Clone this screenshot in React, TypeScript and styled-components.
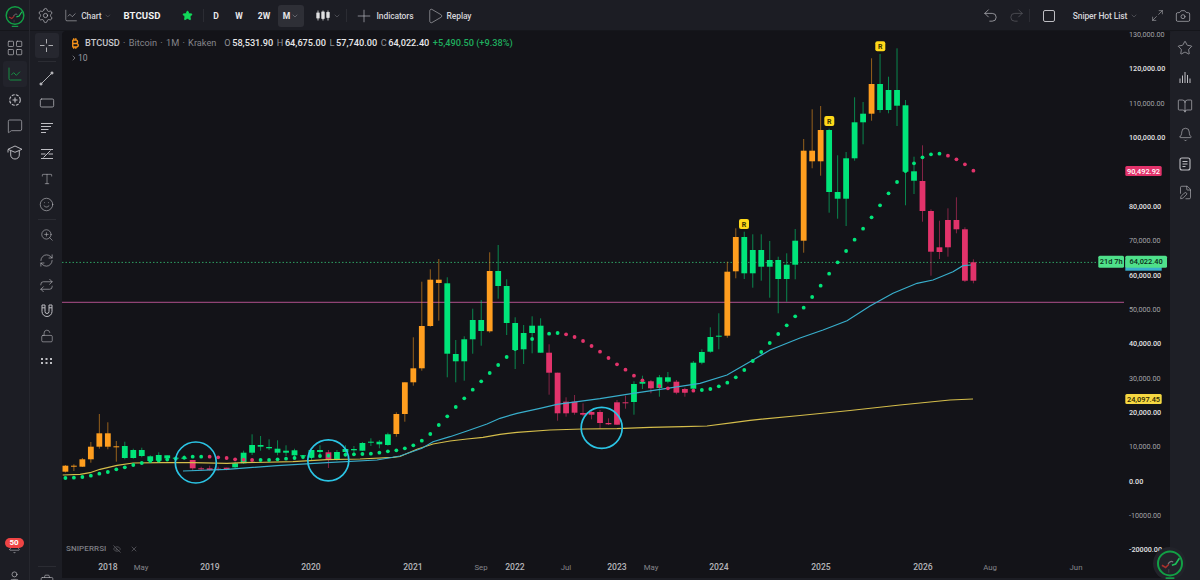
import React from "react";
import styled, { createGlobalStyle } from "styled-components";
import {
  Settings, ChartLine, Star, ChevronDown, Plus, Play, Undo2, Redo2, Maximize2, Camera,
  LayoutGrid, MessageSquare, RectangleHorizontal, Type, Smile, ZoomIn, RefreshCw, Repeat,
  LockOpen, BookOpen, Bell, FilePen, User, BriefcaseBusiness, EyeOff, X, ChevronRight,
} from "lucide-react";
import { FaBitcoinSign } from "react-icons/fa6";

const GREEN = "#00e57a";
const ORANGE = "#ff9e1f";
const RED = "#e2336b";
const BAR = "#1c1d24";
const CHART = "#131318";
const ICON = "#bdbdc2";
const FONT = `Roboto, "Liberation Sans", sans-serif`;

const Global = createGlobalStyle`
  html, body { margin: 0; padding: 0; background: ${BAR}; }
  body { width: 1200px; height: 580px; overflow: hidden; font-family: ${FONT}; }
`;

const Page = styled.div`
  width: 1200px; height: 580px; display: flex; flex-direction: column; overflow: hidden;
  background: ${BAR}; color: #ddd;
`;

/* ---------- Top toolbar ---------- */
const TopBar = styled.header`
  height: 31px; flex: none; display: flex; align-items: center; background: ${BAR};
  box-shadow: inset 0 -1px 0 #15161b;
`;
const Slot = styled.div<{ $w: number; $dim?: boolean; $pl?: number }>`
  width: ${(p) => p.$w}px; height: 31px; flex: none; box-sizing: border-box; display: flex; align-items: center; justify-content: center;
  gap: 3px; padding-left: ${(p) => p.$pl ?? 0}px; font-size: 8.5px; letter-spacing: -0.12px; font-weight: 500; white-space: nowrap;
  color: ${(p) => (p.$dim ? "#5a5b62" : "#d4d4d8")};
`;
const LogoSlot = styled(Slot)`
  border-right: 1px solid #26272e; padding-left: 1px;
`;
const Symbol = styled(Slot)`
  font-size: 9.6px; font-weight: 700; color: #f2f2f2; letter-spacing: 0.1px;
`;
const Interval = styled(Slot)`
  font-size: 8.6px; font-weight: 700; color: #e8e8ea; letter-spacing: 0;
`;
const ActiveInterval = styled.div`
  width: 26px; height: 22px; flex: none; border-radius: 3px; background: #2e2f36; display: flex;
  align-items: center; justify-content: center; gap: 1px; font-size: 8.6px; font-weight: 700; color: #e8e8ea;
`;
const ToolDivider = styled.div`
  width: 1px; height: 13px; flex: none; background: #2b2c33;
`;
const Spacer = styled.div`
  flex: 1;
`;
const SquareIcon = styled.span`
  width: 12px; height: 12px; box-sizing: border-box; border: 1.6px solid #bdbdc2; border-radius: 2px; display: block;
`;

/* ---------- Body and rails ---------- */
const Body = styled.div`
  flex: 1; min-height: 0; display: flex;
`;
const LeftNav = styled.nav`
  width: 30px; flex: none; box-sizing: border-box; border-right: 1px solid #26272e; display: flex;
  flex-direction: column; justify-content: space-between; overflow: hidden; padding-top: 4px;
`;
const NavGroup = styled.div`
  display: flex; flex-direction: column; align-items: center;
`;
const NavItem = styled.div<{ $active?: boolean; $h?: number }>`
  width: 24px; height: ${(p) => p.$h ?? 26}px; display: flex; align-items: center; justify-content: center;
  color: ${ICON}; border-radius: 3px; background: ${(p) => (p.$active ? "#22232b" : "transparent")};
`;
const BellWrap = styled.div`
  position: relative; width: 24px; height: 19px; display: flex; align-items: flex-end; justify-content: center; color: ${ICON};
`;
const Badge = styled.span`
  position: absolute; top: 3px; left: 2px; width: 19px; height: 10px; border-radius: 5px; background: #ee4444;
  color: #fff; font-size: 8px; font-weight: 700; line-height: 10px; text-align: center;
`;
const NavBottom = styled(NavGroup)`
  margin-bottom: -5px; gap: 15px;
`;
const ToolRail = styled.aside`
  width: 32px; flex: none; display: flex; flex-direction: column; align-items: center; padding-top: 2px;
  box-sizing: border-box; overflow: hidden; position: relative; padding-left: 1px;
`;
const ToolBtn = styled.div<{ $active?: boolean }>`
  width: 24px; height: 25.2px; flex: none; display: flex; align-items: center; justify-content: center; color: ${ICON};
  border-radius: 3px; background: ${(p) => (p.$active ? "#26272f" : "transparent")};
`;
const RailSep = styled.div<{ $h: number }>`
  flex: none; height: ${(p) => p.$h}px; width: 18px; display: flex; align-items: center;
  &::after { content: ""; width: 100%; height: 1px; background: #2b2c33; }
`;
const RailFoot = styled.div`
  margin-top: auto; margin-bottom: -8px; display: flex; flex-direction: column; align-items: center; color: ${ICON}; gap: 7px;
`;
const RightRail = styled.aside`
  width: 30px; flex: none; display: flex; flex-direction: column; align-items: center; padding-top: 2px;
  box-sizing: border-box; background: #1e1f26; border-top-left-radius: 4px;
`;
const RightBtn = styled.div`
  width: 30px; height: 29px; display: flex; align-items: center; justify-content: center; color: ${ICON};
`;

/* ---------- Chart ---------- */
const ChartPane = styled.main`
  flex: 1; min-width: 0; position: relative; background: ${CHART}; margin-bottom: 2px; border-top-left-radius: 4px;
`;
const ChartSvg = styled.svg`
  display: block; width: 1108px; height: 547px;
`;
const Legend = styled.div`
  position: absolute; left: 8px; top: 6px; display: flex; flex-direction: column; gap: 3px; font-size: 9.2px; line-height: 12px;
`;
const LegendRow = styled.div`
  display: flex; align-items: center; white-space: nowrap;
`;
const LegendSymbol = styled.span`
  color: #c8c8cc; font-weight: 500; margin-left: 4px;
`;
const LegendMeta = styled.span`
  color: #84848a; margin-right: 8px; word-spacing: 1px;
`;
const Ohlc = styled.span`
  color: #8f8f95; margin-right: 1.5px;
`;
const OhlcValue = styled.span`
  color: #e8e8ea; font-weight: 500; margin-right: 3.5px;
`;
const Change = styled.span`
  color: #1fae5e; font-weight: 500;
`;
const StudyToggle = styled(LegendRow)`
  color: #9a9aa0; font-size: 8.6px;
`;
const PaneLabel = styled.div`
  position: absolute; left: 4px; bottom: 25px; display: flex; align-items: center; color: #7f7f85; font-size: 8px; font-weight: 500;
  letter-spacing: 0.1px;
`;
const PaneIcons = styled.span`
  display: flex; align-items: center; gap: 9px; margin-left: 6px; color: #66666c;
`;
const Float = styled.div`
  position: absolute; right: -16px; bottom: -2px; width: 33px; height: 33px; border-radius: 50%; background: #22232a;
  display: flex; align-items: center; justify-content: center;
`;
const AxisText = styled.text<{ $bright?: boolean }>`
  font-family: ${FONT}; font-size: 7.2px; fill: ${(p) => (p.$bright ? "#e2e2e4" : "#a4a4a8")};
  font-weight: ${(p) => (p.$bright ? 500 : 400)};
`;
const TimeText = styled.text<{ $year?: boolean }>`
  font-family: ${FONT}; font-size: ${(p) => (p.$year ? 8.6 : 7.8)}px; font-weight: ${(p) => (p.$year ? 500 : 400)};
  fill: ${(p) => (p.$year ? "#b4b4b8" : "#85858b")}; text-anchor: middle;
`;
const TagText = styled.text<{ $ink: string }>`
  font-family: ${FONT}; font-size: 7.4px; font-weight: 500; text-anchor: middle; fill: ${(p) => p.$ink};
`;
const RMark = styled.text`
  font-family: ${FONT}; font-size: 7px; font-weight: 700; fill: #3a3000; text-anchor: middle;
`;

/* ---------- Data (pixel positions traced from the chart) ---------- */
type C = [number, number, number, number, "g" | "o" | "r"];
const CANDLES: C[] = [
  [465.7,471.7,465,472.5,"o"],[465.7,466.7,464.3,471,"o"],[459.3,466.7,458,467,"o"],[446.7,459.3,442,462.7,"o"],
  [433.3,446.7,414,448.7,"o"],[433.3,446.7,422.3,449.3,"o"],[446.3,447,441,461.7,"o"],[446,458,441.7,459.3,"g"],
  [450,458,448.7,458.7,"g"],[450,456,447.7,457.3,"g"],[456.3,461,455.3,462.7,"g"],[455,460.7,452.3,462,"g"],
  [455.3,458.3,455.3,460.7,"g"],[457.7,458.7,456,460.3,"g"],[457.7,458.3,455.3,460,"g"],[460,468.3,460,470.7,"r"],
  [468.3,469,466.7,470.7,"r"],[468.3,470,465.7,470.7,"r"],[468.7,470,466.7,470.7,"r"],[467.7,469.7,467.7,470.3,"r"],
  [463.3,467.3,461.7,468.7,"g"],[452.7,463.3,450.7,464,"g"],[445,452.7,434.3,455,"g"],[445,446.7,436,450.7,"g"],
  [447,448.3,439.3,450,"g"],[448.7,452.7,440.3,455.3,"g"],[450.7,452.7,445.3,456,"g"],[450.3,455.3,448.7,458.7,"g"],
  [455.3,456.3,455.3,459.3,"g"],[450,457.7,449.3,460,"g"],[450,452,445.3,457.3,"g"],[452.3,460,450,468,"r"],
  [452,460,450,460.7,"g"],[449,452,445.3,456.7,"g"],[449,450.3,446,455,"g"],[443,450.7,442,451,"g"],
  [441.7,442.7,438.3,446,"g"],[441.7,444.3,440,448.3,"g"],[434.3,445,432.7,445.7,"g"],[414,434,412.3,436.7,"o"],
  [382.3,414,382.3,421.7,"o"],[368.3,382.3,337.3,385.7,"o"],[326,368.3,281.7,370.7,"o"],[279.7,326,269.3,326.7,"o"],
  [279.7,283,259,320.7,"o"],[283.3,353.7,277.3,377.3,"g"],[354,361.3,340,382.3,"g"],[339.3,361.3,336.3,380.7,"g"],
  [320,339.3,308.7,353.7,"g"],[320,331,300,345.7,"g"],[271,331.3,252.3,332.7,"o"],[271,286,245,298.7,"g"],
  [286,323,279.3,335,"g"],[323,350,317.3,369,"g"],[333,349.3,325,364,"g"],[325.7,333,316.3,353.3,"g"],
  [325.7,352.7,318.3,352.7,"g"],[352.7,372.7,344.3,394.7,"r"],[372.7,413.3,372.7,420.7,"r"],[401.7,413.3,397.3,416.7,"r"],
  [401.7,412.7,395,414.7,"r"],[413,414.7,403.3,416,"r"],[412,414.7,410.7,419.3,"r"],[412,423,410,428.7,"r"],
  [423,424.3,418.3,425,"r"],[402.3,424.7,400,425,"r"],[402.3,402.9,395.7,408.7,"r"],[384,402,381.3,414.7,"g"],
  [381.7,383.7,375.7,389,"g"],[381.3,388.3,380,393.3,"r"],[377.3,388,375,396.7,"g"],[377.3,381.7,372,383.3,"g"],
  [381.7,392.7,380,394.3,"r"],[389,392.7,387.7,396.7,"r"],[362.7,388.7,361,390,"g"],[352,362.7,349.3,364.3,"g"],
  [337,351.7,327.3,352.7,"g"],[335.7,336.5,313.3,349.3,"g"],[271.7,335.7,261.7,337.7,"o"],[237,271.3,228.3,278.3,"o"],
  [237,273.3,231.7,279,"g"],[250,273.3,234.3,287.7,"g"],[250,266.7,234.3,280.7,"g"],[260,266.7,241,297.7,"g"],
  [260,279,256.7,313.3,"g"],[264.7,279,253.3,301.7,"g"],[240.7,264.7,229,279.3,"g"],[150.7,240.7,139,252.7,"o"],
  [150.7,161.3,109.3,168.3,"o"],[130,161.3,106,175.7,"o"],[130,192,128.7,212.7,"g"],[192,198.7,155.3,218.7,"g"],
  [158.3,198.7,152,226,"g"],[122.3,158.3,97.3,160.7,"g"],[113.7,122.3,102,144.3,"g"],[84,113.7,58.3,120.7,"o"],
  [84,110,54,112.7,"g"],[90,110,76.7,113.3,"g"],[90,105.7,48.3,126,"g"],[105.3,171.7,100,205.3,"g"],
  [171.3,180.7,156.7,194,"g"],[181,211,145.3,221.7,"r"],[211,251.7,209.3,275.7,"r"],[247.3,252,220.7,259,"r"],
  [220,247.3,208.3,256.7,"r"],[220,229.3,197.3,233.3,"r"],[229.3,280.7,227.3,282,"r"],[262.3,280.7,259.3,283.3,"r"],
];
const DOTS = [
  478,477.7,477,475.7,473.7,472,469.3,467.3,465,463,461,460.5,459.5,458.7,457.7,456.7,456.7,456.7,457.3,458,459.3,459.7,460,460,460,459.3,
  458.7,458,457,456.3,456,455.7,455.3,454.7,454.3,454,453.7,452.7,451.3,450.3,448.3,445.3,440.7,434,425,416.3,407,398.3,389.7,381.3,373,365,
  357,349,344,339,336.5,333.7,333,334.3,337,341,346,351.7,358,364.3,369.7,375.7,380.3,383.5,386,388.3,389.5,390.7,390.7,390,389,386.3,382.7,
  377.3,370,361,352,343,334,325.3,316.3,307.7,297,285.7,273.7,262.3,251,239.7,228.7,217.3,205.3,193.3,182,171,163.3,157.3,154.3,153.7,155.7,
  159.3,164.3,170.7,
];
const isRedDot = (i: number) => (i >= 17 && i <= 22) || (i >= 59 && i <= 74) || i >= 104;
const YELLOW = "62.7,475 80,474.3 90,472.7 100,469.3 117,465.3 133,463 160,462.7 193,462.7 227,463.3 243,462.7 293,461.7 327,459.7 360,459 393,457.3 400,456.5 417,449.3 433,444 450,441 467,439 483,437.3 500,434.3 517,432.3 550,430 583,429 617,428.7 650,427.3 683,426.7 707,426 733,422.7 750,420.3 800,415.5 850,410.5 900,405 950,400 973,399";
const CYAN = "183,471 227,469.3 277,465.7 327,462.7 377,460 400,456 422,448.3 433,441.7 450,436.7 467,431 487,424 500,418.3 517,413.3 540,408.3 557,404.3 600,398.7 633,393.3 667,388.3 700,383.3 727,375 750,361.7 770,350 790,342 800,338 823,330 847,320.7 870,306 893,293.3 917,283.3 933,280 953,271.7 963,265.7 971,265";
const COLOR = { g: GREEN, o: ORANGE, r: RED };
const X0 = 65.4;
const STEP = 8.486;
const TICKS = ["130,000.00","120,000.00","110,000.00","100,000.00","","80,000.00","70,000.00","60,000.00","50,000.00","40,000.00","30,000.00","20,000.00","10,000.00","0.00","-10000.00","-20000.00"];
const TIMES: [string, number, boolean][] = [
  ["2018",108,true],["May",141,false],["2019",210,true],["2020",311,true],["2021",413,true],["Sep",481,false],["2022",515,true],
  ["Jul",566,false],["2023",617,true],["May",651,false],["2024",719,true],["2025",821,true],["2026",923,true],["Aug",990,false],["Jun",1076,false],
];

const Logo = ({ size }: { size: number }) => (
  <svg width={size} height={size} viewBox="0 0 24 24" fill="none">
    <circle cx="12" cy="11.5" r="9.6" stroke="#12a045" strokeWidth="1.6" />
    <path d="M5.5 13l3 1.8 2.6-2.6" stroke="#a8302c" strokeWidth="1.3" />
    <path d="M10.5 12c1-2 2.8-2.6 4-1.5" stroke="#77787c" strokeWidth="1" />
    <path d="M13.5 13l3-1 3-4.6" stroke="#1cc15a" strokeWidth="1.3" />
    <path d="M11 16v3" stroke="#3b3c42" strokeWidth="1" />
    <path d="M8.5 23.3h7" stroke="#14a94a" strokeWidth="1.2" />
  </svg>
);
const Crosshair = () => (
  <svg width="13" height="13" viewBox="0 0 13 13" stroke="currentColor" strokeWidth="0.9">
    <path d="M6.5 0v4.5M6.5 8.5v4.5M0 6.5h4.5M8.5 6.5h4.5" />
  </svg>
);
const LineTool = () => (
  <svg width="15" height="15" viewBox="0 0 15 15" fill="none" stroke="currentColor" strokeWidth="0.9">
    <path d="M2.5 12.5L12.5 2.5" /><circle cx="2" cy="13" r="1.1" fill="currentColor" /><circle cx="13" cy="2" r="1.1" fill="currentColor" />
  </svg>
);
const FibTool = () => (
  <svg width="14" height="13" viewBox="0 0 14 13" stroke="currentColor" strokeWidth="1">
    <path d="M1 1.5h12M1 4.5h10M1 7.5h7.5M1 10.5h5" />
  </svg>
);
const ChannelTool = () => (
  <svg width="14" height="14" viewBox="0 0 14 14" stroke="currentColor" strokeWidth="1" fill="none">
    <path d="M1 2.5h12M1 7h4.5M8.5 7h4.5M1 11.5h12M3.5 10.5L10.5 3.5" />
  </svg>
);
const Target = () => (
  <svg width="14" height="14" viewBox="0 0 14 14" fill="none" stroke="currentColor" strokeWidth="1.1">
    <circle cx="7" cy="7" r="5.3" strokeDasharray="3 1.2" /><path d="M7 4.5v5M4.5 7h5" />
  </svg>
);
const Mortar = () => (
  <svg width="16" height="15" viewBox="0 0 16 15" fill="none" stroke="currentColor" strokeWidth="0.95" strokeLinejoin="round">
    <path d="M8 1L1 4.3l7 3 7-3z" /><path d="M3.7 5.8V10c0 2.5 2 4 4.3 4s4.3-1.5 4.3-4V5.8" /><path d="M1 4.5v3" />
  </svg>
);
const MagnetIcon = () => (
  <svg width="12" height="13" viewBox="0 0 12 13" fill="none" stroke="currentColor" strokeWidth="1">
    <path d="M1 1h3v6.5a2 2 0 0 0 4 0V1h3v6.5a5 5 0 0 1-10 0z" /><path d="M1 3.8h3M8 3.8h3" />
  </svg>
);
const DotsIcon = () => (
  <svg width="11" height="6" viewBox="0 0 11 6" fill="currentColor">
    <rect x="0" y="0" width="2" height="2" /><rect x="4.5" y="0" width="2" height="2" /><rect x="9" y="0" width="2" height="2" />
    <rect x="0" y="4" width="2" height="2" /><rect x="4.5" y="4" width="2" height="2" /><rect x="9" y="4" width="2" height="2" />
  </svg>
);
const Bars = () => (
  <svg width="12" height="12" viewBox="0 0 12 12" stroke="currentColor" strokeWidth="1">
    <path d="M1 12V7.5M3.5 12V4.5M6 12V1M8.5 12V4M11 12V7.5" />
  </svg>
);
const NoteIcon = () => (
  <svg width="12" height="14" viewBox="0 0 12 14" fill="none" stroke="currentColor" strokeWidth="1.1">
    <rect x="1" y="1" width="10" height="12" rx="2" /><path d="M3.5 4.5h5M3.5 7h5M3.5 9.5h3" />
  </svg>
);
const CandleIcon = () => (
  <svg width="14" height="11" viewBox="0 0 14 11" fill="#e0e0e2" stroke="#e0e0e2" strokeWidth="0.8">
    <path d="M2 0.5v10M7 0.5v10M12 0.5v10" /><rect x="0.8" y="3" width="2.4" height="5" /><rect x="5.8" y="2" width="2.4" height="6.5" /><rect x="10.8" y="2.5" width="2.4" height="5" />
  </svg>
);
const Chev = ({ c = "#77787e" }: { c?: string }) => <ChevronDown size={8} color={c} strokeWidth={1.5} />;

const PriceTag = ({ x, y, w, h, fill, ink, label }: { x: number; y: number; w: number; h: number; fill: string; ink: string; label: string }) => (
  <g>
    <rect x={x} y={y} width={w} height={h} rx={1.5} fill={fill} />
    <TagText x={x + w / 2} y={y + h / 2 + 2.7} $ink={ink}>{label}</TagText>
  </g>
);
const RBadge = ({ x, y }: { x: number; y: number }) => (
  <g>
    <rect x={x - 5} y={y - 5} width={10} height={10} rx={2} fill="#ffd91a" />
    <RMark x={x} y={y + 2.5}>R</RMark>
  </g>
);
const Ring = ({ cx, cy }: { cx: number; cy: number }) => (
  <circle cx={cx} cy={cy} r={20.5} fill="none" stroke="#2bc4e4" strokeWidth={1.7} />
);

const Chart = () => (
  <ChartSvg viewBox="62 31 1108 547">
    <line x1={62} x2={1098} y1={262.4} y2={262.4} stroke="#2ea063" strokeWidth={1} strokeDasharray="1.5 2" />
    <line x1={62} x2={1124} y1={302.3} y2={302.3} stroke="#b0508c" strokeWidth={1} />
    {CANDLES.map(([t, b, h, l, k], i) => {
      const cx = X0 + i * STEP;
      return (
        <g key={i}>
          <line x1={cx} x2={cx} y1={h} y2={l} stroke={COLOR[k]} strokeOpacity={0.55} strokeWidth={1} />
          <rect x={cx - 2.9} y={t} width={5.8} height={Math.max(b - t, 1)} fill={COLOR[k]} />
        </g>
      );
    })}
    <polyline points={YELLOW} fill="none" stroke="#d4bd4b" strokeWidth={1.2} />
    <polyline points={CYAN} fill="none" stroke="#38aecb" strokeWidth={1.2} />
    {DOTS.map((y, i) => (
      <circle key={i} cx={X0 + i * STEP} cy={y} r={1.9} fill={isRedDot(i) ? RED : GREEN} />
    ))}
    <Ring cx={195.8} cy={462.5} />
    <Ring cx={328.3} cy={460.3} />
    <Ring cx={601.7} cy={427.8} />
    <RBadge x={744} y={224} />
    <RBadge x={829.3} y={121} />
    <RBadge x={880.3} y={46.3} />
    {TICKS.map((t, i) => {
      const y = 481 - (13 - i) * 34.35;
      return t ? <AxisText key={t} x={1129} y={y + 2.6} $bright={i % 2 === 1}>{t}</AxisText> : null;
    })}
    <PriceTag x={1125.3} y={166} w={36.4} h={10} fill={RED} ink="#fff" label="90,492.92" />
    <rect x={1125.3} y={260} width={36.4} height={10.7} fill="#38aecb" />
    <PriceTag x={1125.3} y={255.7} w={41.7} h={12} fill="#4fe08a" ink="#0b2a18" label="64,022.40" />
    <PriceTag x={1098.3} y={255.7} w={25.7} h={12} fill="#4fe08a" ink="#0b2a18" label="21d 7h" />
    <PriceTag x={1125.3} y={394} w={36.4} h={10} fill="#f5d742" ink="#2c2600" label="24,097.45" />
    {TIMES.map(([t, x, y]) => (
      <TimeText key={t + x} x={x} y={570} $year={y}>{t}</TimeText>
    ))}
  </ChartSvg>
);

export default function App() {
  return (
    <Page>
      <Global />
      <TopBar>
        <LogoSlot $w={30}><Logo size={22} /></LogoSlot>
        <Slot $w={30}><Settings size={17} strokeWidth={1} color={ICON} /></Slot>
        <Slot $w={52} $pl={4}><ChartLine size={15} strokeWidth={1} color={ICON} />Chart<Chev /></Slot>
        <Symbol $w={60}>BTCUSD</Symbol>
        <Slot $w={31}><Star size={11} fill="#12d85a" color="#12d85a" /></Slot>
        <ToolDivider />
        <Interval $w={24}>D</Interval>
        <Interval $w={22}>W</Interval>
        <Interval $w={28}>2W</Interval>
        <ActiveInterval>M<Chev c="#9a9aa0" /></ActiveInterval>
        <Slot $w={42} $pl={6}><CandleIcon /><Chev /></Slot>
        <ToolDivider />
        <Slot $w={71} $pl={2}><Plus size={20} strokeWidth={0.8} color={ICON} />Indicators</Slot>
        <Slot $w={61}><Play size={18} strokeWidth={0.8} color={ICON} />Replay</Slot>
        <Spacer />
        <Slot $w={25}><Undo2 size={17} strokeWidth={1} color={ICON} /></Slot>
        <Slot $w={26} $dim><Redo2 size={17} strokeWidth={1} /></Slot>
        <ToolDivider />
        <Slot $w={38}><SquareIcon /></Slot>
        <Slot $w={75}>Sniper Hot List<Chev /></Slot>
        <Slot $w={28}><Maximize2 size={13} strokeWidth={1} color={ICON} /></Slot>
        <Slot $w={24}><Camera size={16} strokeWidth={1} color={ICON} /></Slot>
        <Slot $w={5} />
      </TopBar>
      <Body>
        <LeftNav>
          <NavGroup>
            <NavItem><LayoutGrid size={18} strokeWidth={0.9} /></NavItem>
            <NavItem $active><ChartLine size={16} strokeWidth={1.2} color="#14a94a" /></NavItem>
            <NavItem><Target /></NavItem>
            <NavItem><MessageSquare size={16} strokeWidth={1} /></NavItem>
            <NavItem><Mortar /></NavItem>
          </NavGroup>
          <NavBottom>
            <BellWrap>
              <Bell size={13} strokeWidth={1.1} />
              <Badge>50</Badge>
            </BellWrap>
            <NavItem $h={16}><User size={15} strokeWidth={1.1} /></NavItem>
          </NavBottom>
        </LeftNav>
        <ToolRail>
          <ToolBtn $active><Crosshair /></ToolBtn>
          <RailSep $h={7.5} />
          <ToolBtn><LineTool /></ToolBtn>
          <ToolBtn><RectangleHorizontal size={16} strokeWidth={1.1} /></ToolBtn>
          <ToolBtn><FibTool /></ToolBtn>
          <ToolBtn><ChannelTool /></ToolBtn>
          <ToolBtn><Type size={14} strokeWidth={1} /></ToolBtn>
          <ToolBtn><Smile size={15} strokeWidth={1} /></ToolBtn>
          <RailSep $h={6} />
          <ToolBtn><ZoomIn size={14} strokeWidth={1} /></ToolBtn>
          <ToolBtn><RefreshCw size={15} strokeWidth={1} /></ToolBtn>
          <ToolBtn><Repeat size={15} strokeWidth={1} /></ToolBtn>
          <ToolBtn><MagnetIcon /></ToolBtn>
          <ToolBtn><LockOpen size={14} strokeWidth={1} /></ToolBtn>
          <ToolBtn><DotsIcon /></ToolBtn>
          <RailFoot>
            <RailSep $h={1} />
            <BriefcaseBusiness size={14} strokeWidth={1.1} />
          </RailFoot>
        </ToolRail>
        <ChartPane>
          <Chart />
          <Legend>
            <LegendRow>
              <FaBitcoinSign size={11} color="#f7931a" />
              <LegendSymbol>BTCUSD</LegendSymbol>
              <LegendMeta>&nbsp;· Bitcoin · 1M · Kraken</LegendMeta>
              <Ohlc>O</Ohlc><OhlcValue>58,531.90</OhlcValue>
              <Ohlc>H</Ohlc><OhlcValue>64,675.00</OhlcValue>
              <Ohlc>L</Ohlc><OhlcValue>57,740.00</OhlcValue>
              <Ohlc>C</Ohlc><OhlcValue>64,022.40</OhlcValue>
              <Change>+5,490.50 (+9.38%)</Change>
            </LegendRow>
            <StudyToggle><ChevronRight size={8} />10</StudyToggle>
          </Legend>
          <PaneLabel>
            SNIPERRSI
            <PaneIcons><EyeOff size={8} /><X size={8} /></PaneIcons>
          </PaneLabel>
          <Float><Logo size={30} /></Float>
        </ChartPane>
        <RightRail>
          <RightBtn><Star size={16} strokeWidth={1} /></RightBtn>
          <RightBtn><Bars /></RightBtn>
          <RightBtn><BookOpen size={16} strokeWidth={1} /></RightBtn>
          <RightBtn><Bell size={15} strokeWidth={1} /></RightBtn>
          <RightBtn><NoteIcon /></RightBtn>
          <RightBtn><FilePen size={15} strokeWidth={1} /></RightBtn>
        </RightRail>
      </Body>
    </Page>
  );
}
